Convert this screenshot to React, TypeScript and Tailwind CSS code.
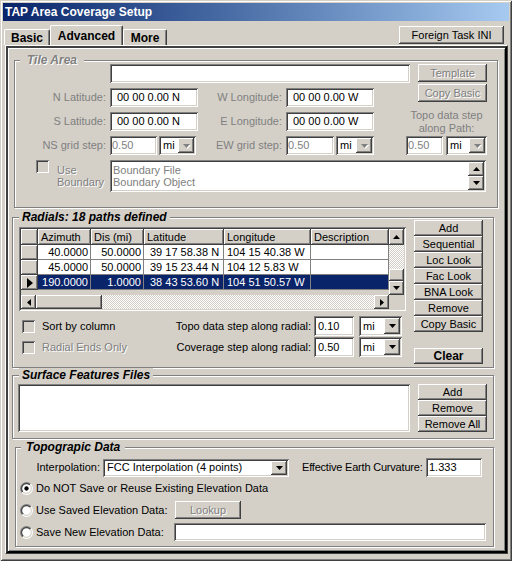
import React from "react";

const font = "font-['Liberation_Sans',Arial,sans-serif]";
const raised =
  "bg-[#d4d0c8] shadow-[inset_-1px_-1px_0_#404040,inset_1px_1px_0_#ffffff,inset_-2px_-2px_0_#808080,inset_2px_2px_0_#d4d0c8]";
const sunken =
  "shadow-[inset_1px_1px_0_#808080,inset_-1px_-1px_0_#ffffff,inset_2px_2px_0_#404040,inset_-2px_-2px_0_#d4d0c8]";
const etched = "border border-[#808080] shadow-[inset_1px_1px_0_#ffffff,1px_1px_0_#ffffff]";
const embossed = "text-[#808080] [text-shadow:1px_1px_0_#ffffff]";
const checker = "bg-[repeating-conic-gradient(#d4d0c8_0_25%,#ffffff_0_50%)] bg-[length:2px_2px]";

type Kids = { children?: React.ReactNode; className?: string };

function Button({ children, className = "", disabled = false }: Kids & { disabled?: boolean }) {
  return (
    <div
      className={`${raised} flex items-center justify-center text-[11px] leading-none shrink-0 ${
        disabled ? embossed : "text-black"
      } ${className}`}
    >
      {children}
    </div>
  );
}

function Arrow({ dir = "down", disabled = false }: { dir?: "up" | "down" | "left" | "right"; disabled?: boolean }) {
  const pts = {
    down: "0,0 7,0 3.5,4",
    up: "0,4 7,4 3.5,0",
    left: "4,0 4,7 0,3.5",
    right: "0,0 0,7 4,3.5",
  }[dir];
  const vert = dir === "up" || dir === "down";
  const w = vert ? 7 : 4;
  const h = vert ? 4 : 7;
  return (
    <svg width={w} height={h} viewBox={`0 0 ${w} ${h}`} className="overflow-visible">
      {disabled && <polygon points={pts} fill="#ffffff" transform="translate(1,1)" />}
      <polygon points={pts} fill={disabled ? "#808080" : "#000000"} />
    </svg>
  );
}

function Field({ value = "", className = "", dim = false }: { value?: string; className?: string; dim?: boolean }) {
  return (
    <div
      className={`${sunken} bg-white flex items-center text-[11px] leading-none shrink-0 ${
        dim ? "text-[#808080]" : "text-black"
      } ${className}`}
    >
      {value}
    </div>
  );
}

function Combo({ value, className = "", disabled = false }: { value: string; className?: string; disabled?: boolean }) {
  return (
    <div className={`${sunken} bg-white flex items-stretch p-[2px] shrink-0 ${className}`}>
      <span className="flex-1 flex items-center pl-[2px] text-[11px] leading-none text-black whitespace-nowrap">
        {value}
      </span>
      <div className={`${raised} w-[16px] flex items-center justify-center`}>
        <Arrow disabled={disabled} />
      </div>
    </div>
  );
}

function Check() {
  return <div className={`${sunken} bg-[#d4d0c8] w-[13px] h-[13px] shrink-0`} />;
}

function Radio({ checked = false }: { checked?: boolean }) {
  return (
    <svg width="13" height="13" viewBox="0 0 12 12" className="shrink-0">
      <defs>
        <linearGradient id="rOuter" x1="0" y1="0" x2="1" y2="1">
          <stop offset="0.5" stopColor="#808080" />
          <stop offset="0.5" stopColor="#ffffff" />
        </linearGradient>
        <linearGradient id="rInner" x1="0" y1="0" x2="1" y2="1">
          <stop offset="0.5" stopColor="#404040" />
          <stop offset="0.5" stopColor="#d4d0c8" />
        </linearGradient>
      </defs>
      <circle cx="6" cy="6" r="6" fill="url(#rOuter)" />
      <circle cx="6" cy="6" r="5" fill="url(#rInner)" />
      <circle cx="6" cy="6" r="4" fill="#ffffff" />
      {checked && <circle cx="6" cy="6" r="2" fill="#000000" />}
    </svg>
  );
}

function Group({
  title,
  disabled = false,
  className = "",
  legendClass = "",
  children,
}: Kids & { title: string; disabled?: boolean; legendClass?: string }) {
  return (
    <div className={`relative shrink-0 ${etched} ${className}`}>
      <div
        className={`absolute top-[-8px] h-[14px] leading-[14px] bg-[#d4d0c8] text-[12px] font-bold italic whitespace-nowrap ${
          disabled ? embossed : "text-black"
        } ${legendClass}`}
      >
        {title}
      </div>
      {children}
    </div>
  );
}

function Label({ children, className = "" }: Kids) {
  return (
    <span className={`text-right text-[11px] leading-none text-[#808080] shrink-0 whitespace-nowrap ${className}`}>
      {children}
    </span>
  );
}

const rows = [
  ["40.0000", "50.0000", "39 17 58.38 N", "104 15 40.38 W"],
  ["45.0000", "50.0000", "39 15 23.44 N", "104 12 5.83 W"],
  ["190.0000", "1.0000", "38 43 53.60 N", "104 51 50.57 W"],
];

function RadialGrid() {
  const heads = [
    { t: "Azimuth", w: "w-[53px]" },
    { t: "Dis (mi)", w: "w-[53px]" },
    { t: "Latitude", w: "w-[80px]" },
    { t: "Longitude", w: "w-[87px]" },
    { t: "Description", w: "w-[78px]" },
  ];
  return (
    <div className={`${sunken} bg-[#d4d0c8] w-[387px] h-[84px] p-[2px] flex flex-col`}>
      <div className="flex h-[66px]">
        <div className="w-[368px] flex flex-col">
          <div className="flex h-[16px]">
            <div className={`${raised} w-[17px]`} />
            {heads.map((h) => (
              <div key={h.t} className={`${raised} ${h.w} flex items-center pl-[3px] text-[11px] leading-none overflow-hidden whitespace-nowrap`}>
                {h.t}
              </div>
            ))}
          </div>
          {rows.map((r, i) => {
            const sel = i === 2;
            const cell = `h-full flex items-center border-r border-b border-[#808080] text-[11px] leading-none whitespace-nowrap ${
              sel ? "bg-[#0a246a] text-white" : "bg-white text-black"
            }`;
            return (
              <div key={i} className="flex h-[15px]">
                <div className={`${raised} w-[17px] flex items-center justify-center`}>
                  {sel && (
                    <svg width="6" height="10" viewBox="0 0 6 10">
                      <polygon points="0,0 6,5 0,10" fill="#000000" />
                    </svg>
                  )}
                </div>
                <div className={`${cell} w-[53px] justify-end pr-[2px]`}>{r[0]}</div>
                <div className={`${cell} w-[53px] justify-end pr-[2px]`}>{r[1]}</div>
                <div className={`${cell} w-[80px] pl-[6px]`}>{r[2]}</div>
                <div className={`${cell} w-[87px] pl-[3px]`}>{r[3]}</div>
                <div className={`${cell} w-[78px]`} />
              </div>
            );
          })}
        </div>
        <div className="w-[15px] flex flex-col">
          <div className={`${raised} h-[16px] flex items-center justify-center`}>
            <Arrow dir="up" />
          </div>
          <div className={`${checker} h-[24px]`} />
          <div className={`${raised} h-[12px]`} />
          <div className={`${raised} h-[14px] flex items-center justify-center`}>
            <Arrow dir="down" />
          </div>
        </div>
      </div>
      <div className="flex h-[14px]">
        <div className={`${raised} w-[15px] flex items-center justify-center`}>
          <Arrow dir="left" />
        </div>
        <div className={`${raised} w-[66px]`} />
        <div className={`${checker} flex-1`} />
        <div className={`${raised} w-[15px] flex items-center justify-center`}>
          <Arrow dir="right" />
        </div>
        <div className="w-[15px] bg-[#d4d0c8]" />
      </div>
    </div>
  );
}

function Tab({ children, active = false, className = "" }: Kids & { active?: boolean }) {
  return (
    <div
      className={`flex items-center justify-center font-bold text-[12px] leading-none text-black bg-[#d4d0c8] border-l border-t border-white border-r border-r-[#404040] rounded-t-[2px] shadow-[inset_-1px_0_0_#808080] ${
        active ? "h-[20px]" : "h-[16px]"
      } ${className}`}
    >
      {children}
    </div>
  );
}

export default function App() {
  return (
    <div
      className={`${font} w-[512px] h-[561px] bg-[#d4d0c8] p-[3px] flex flex-col overflow-hidden text-black shadow-[inset_1px_1px_0_#d4d0c8,inset_-1px_-1px_0_#404040,inset_2px_2px_0_#ffffff,inset_-2px_-2px_0_#808080]`}
    >
      {/* Title bar */}
      <div className="h-[18px] shrink-0 bg-linear-to-r from-[#0a246a] to-[#a6caf0] flex items-center pl-[2px]">
        <span className="text-white font-bold text-[12px] leading-none">TAP Area Coverage Setup</span>
      </div>

      {/* Tabs */}
      <div className="h-[24px] shrink-0 flex items-end">
        <Tab className="ml-[1px] w-[46px]">Basic</Tab>
        <Tab active className="w-[73px]">Advanced</Tab>
        <Tab className="w-[44px]">More</Tab>
        <Button className="ml-auto mr-[5px] self-start mt-[5px] w-[105px] h-[18px]">Foreign Task INI</Button>
      </div>

      {/* Tab page */}
      <div className="ml-[2px] w-[503px] h-[509px] shrink-0 border border-t-white border-l-white border-r-[#404040] border-b-[#404040]">
        <div className="h-full border-2 border-t-[#404040] border-l-[#404040] border-r-black border-b-black shadow-[inset_1px_1px_0_#ffffff,inset_-1px_-1px_0_#808080] flex flex-col">
          {/* Tile Area */}
          <Group
            title="Tile Area"
            disabled
            className="ml-[6px] mt-[12px] w-[484px] h-[148px]"
            legendClass="left-[5px] px-[7px]"
          >
            <div className="flex pt-[3px]">
              <div className="w-[396px] shrink-0">
                <Field className="ml-[95px] w-[300px] h-[19px]" />
                <div className="flex items-center mt-[5px] h-[19px]">
                  <Label className="w-[91px]">N Latitude:</Label>
                  <Field className="ml-[4px] w-[88px] h-full pl-[7px]" value="00 00 0.00 N" />
                  <Label className="w-[84px]">W Longitude:</Label>
                  <Field className="ml-[4px] w-[88px] h-full pl-[7px]" value="00 00 0.00 W" />
                </div>
                <div className="flex items-center mt-[5px] h-[19px]">
                  <Label className="w-[91px]">S Latitude:</Label>
                  <Field className="ml-[4px] w-[88px] h-full pl-[7px]" value="00 00 0.00 N" />
                  <Label className="w-[84px]">E Longitude:</Label>
                  <Field className="ml-[4px] w-[88px] h-full pl-[7px]" value="00 00 0.00 W" />
                </div>
                <div className="flex items-center mt-[5px] h-[19px]">
                  <Label className="w-[91px]">NS grid step:</Label>
                  <Field dim className="ml-[4px] w-[47px] h-full pl-[2px]" value="0.50" />
                  <Combo disabled value="mi" className="ml-[2px] w-[37px] h-full" />
                  <Label className="w-[86px]">EW grid step:</Label>
                  <Field dim className="ml-[4px] w-[48px] h-full pl-[2px]" value="0.50" />
                  <Combo disabled value="mi" className="ml-[2px] w-[38px] h-full" />
                </div>
              </div>
              <div className="flex flex-col">
                <Button disabled className="ml-[7px] w-[69px] h-[18px]">
                  Template
                </Button>
                <Button disabled className="ml-[7px] mt-[2px] w-[69px] h-[18px]">
                  Copy Basic
                </Button>
                <div className="-ml-[5px] w-[81px] mt-[7px] text-center text-[11px] leading-[13px] text-[#808080]">
                  Topo data step
                  <br />
                  along Path:
                </div>
                <div className="flex -ml-[5px] mt-[1px] h-[19px]">
                  <Field dim className="w-[37px] h-full pl-[2px]" value="0.50" />
                  <Combo disabled value="mi" className="ml-[3px] w-[41px] h-full" />
                </div>
              </div>
            </div>
            <div className="flex mt-[5px]">
              <div className="ml-[21px]">
                <Check />
              </div>
              <div className={`ml-[8px] w-[53px] mt-[4px] text-[11px] leading-[12px] ${embossed}`}>
                Use
                <br />
                Boundary
              </div>
              <div className={`${sunken} bg-white w-[376px] h-[32px] p-[2px] flex`}>
                <div className="flex-1 pl-[1px] pt-[2px] text-[11px] leading-[12px] text-[#808080]">
                  Boundary File
                  <br />
                  Boundary Object
                </div>
                <div className="w-[16px] flex flex-col">
                  <div className={`${raised} h-[14px] flex items-center justify-center`}>
                    <Arrow dir="up" />
                  </div>
                  <div className={`${raised} h-[14px] flex items-center justify-center`}>
                    <Arrow dir="down" />
                  </div>
                </div>
              </div>
            </div>
          </Group>

          {/* Radials */}
          <Group
            title="Radials: 18 paths defined"
            className="ml-[4px] mt-[9px] w-[482px] h-[151px]"
            legendClass="left-[6px] px-[3px]"
          >
            <div className="flex items-start">
              <div className="ml-[6px] mt-[9px] w-[387px] flex flex-col">
                <RadialGrid />
                <div className="flex items-center mt-[5px] h-[20px] pr-[4px]">
                  <div className="ml-[3px]">
                    <Check />
                  </div>
                  <span className="ml-[7px] flex-1 text-[11px] leading-none">Sort by column</span>
                  <span className="text-[11px] leading-none whitespace-nowrap">Topo data step along radial:</span>
                  <Field className="ml-[3px] w-[40px] h-full pl-[4px]" value="0.10" />
                  <Combo value="mi" className="ml-[5px] w-[43px] h-full" />
                </div>
                <div className="flex items-center mt-[1px] h-[20px] pr-[4px]">
                  <div className="ml-[3px]">
                    <Check />
                  </div>
                  <span className={`ml-[7px] flex-1 text-[11px] leading-none ${embossed}`}>Radial Ends Only</span>
                  <span className="text-[11px] leading-none whitespace-nowrap">Coverage step along radial:</span>
                  <Field className="ml-[3px] w-[40px] h-full pl-[4px]" value="0.50" />
                  <Combo value="mi" className="ml-[5px] w-[43px] h-full" />
                </div>
              </div>
              <div className="ml-[8px] mt-[2px] w-[69px] flex flex-col">
                {["Add", "Sequential", "Loc Look", "Fac Look", "BNA Look", "Remove", "Copy Basic"].map((b) => (
                  <Button key={b} className="h-[16px] w-full">
                    {b}
                  </Button>
                ))}
                <Button className="mt-[16px] h-[16px] w-full font-bold text-[12px]">Clear</Button>
              </div>
            </div>
          </Group>

          {/* Surface Features */}
          <Group
            title="Surface Features Files"
            className="ml-[4px] mt-[7px] w-[482px] h-[64px]"
            legendClass="left-[6px] px-[3px]"
          >
            <div className="flex">
              <div className={`${sunken} bg-white ml-[5px] mt-[8px] w-[392px] h-[48px] shrink-0`} />
              <div className="ml-[8px] mt-[8px] w-[69px] flex flex-col">
                <Button className="h-[16px] w-full">Add</Button>
                <Button className="h-[16px] w-full">Remove</Button>
                <Button className="h-[16px] w-full">Remove All</Button>
              </div>
            </div>
          </Group>

          {/* Topographic data */}
          <Group
            title="Topograpic Data"
            className="ml-[7px] mt-[8px] w-[479px] h-[100px]"
            legendClass="left-[5px] px-[5px]"
          >
            <div className="flex items-center mt-[10px] h-[19px]">
              <span className="w-[84px] text-right text-[11px] leading-none shrink-0">Interpolation:</span>
              <Combo value="FCC Interpolation (4 points)" className="ml-[3px] w-[186px] h-[18px]" />
              <span className="ml-[13px] text-[11px] leading-none whitespace-nowrap tracking-[-0.2px]">
                Effective Earth Curvature:
              </span>
              <Field className="ml-auto mr-[11px] w-[56px] h-full pl-[3px]" value="1.333" />
            </div>
            <div className="flex items-center mt-[1px] h-[20px]">
              <div className="ml-[4px] flex">
                <Radio checked />
              </div>
              <span className="ml-[3px] text-[11px] leading-none whitespace-nowrap">
                Do NOT Save or Reuse Existing Elevation Data
              </span>
            </div>
            <div className="flex items-center mt-[2px] h-[20px]">
              <div className="ml-[4px] flex">
                <Radio />
              </div>
              <span className="ml-[3px] w-[139px] text-[11px] leading-none whitespace-nowrap shrink-0">
                Use Saved Elevation Data:
              </span>
              <Button disabled className="w-[66px] h-[18px]">
                Lookup
              </Button>
            </div>
            <div className="flex items-center mt-[2px] h-[20px]">
              <div className="ml-[4px] flex">
                <Radio />
              </div>
              <span className="ml-[3px] w-[138px] text-[11px] leading-none whitespace-nowrap shrink-0">
                Save New Elevation Data:
              </span>
              <Field className="w-[312px] h-[18px]" />
            </div>
          </Group>
        </div>
      </div>
    </div>
  );
}
